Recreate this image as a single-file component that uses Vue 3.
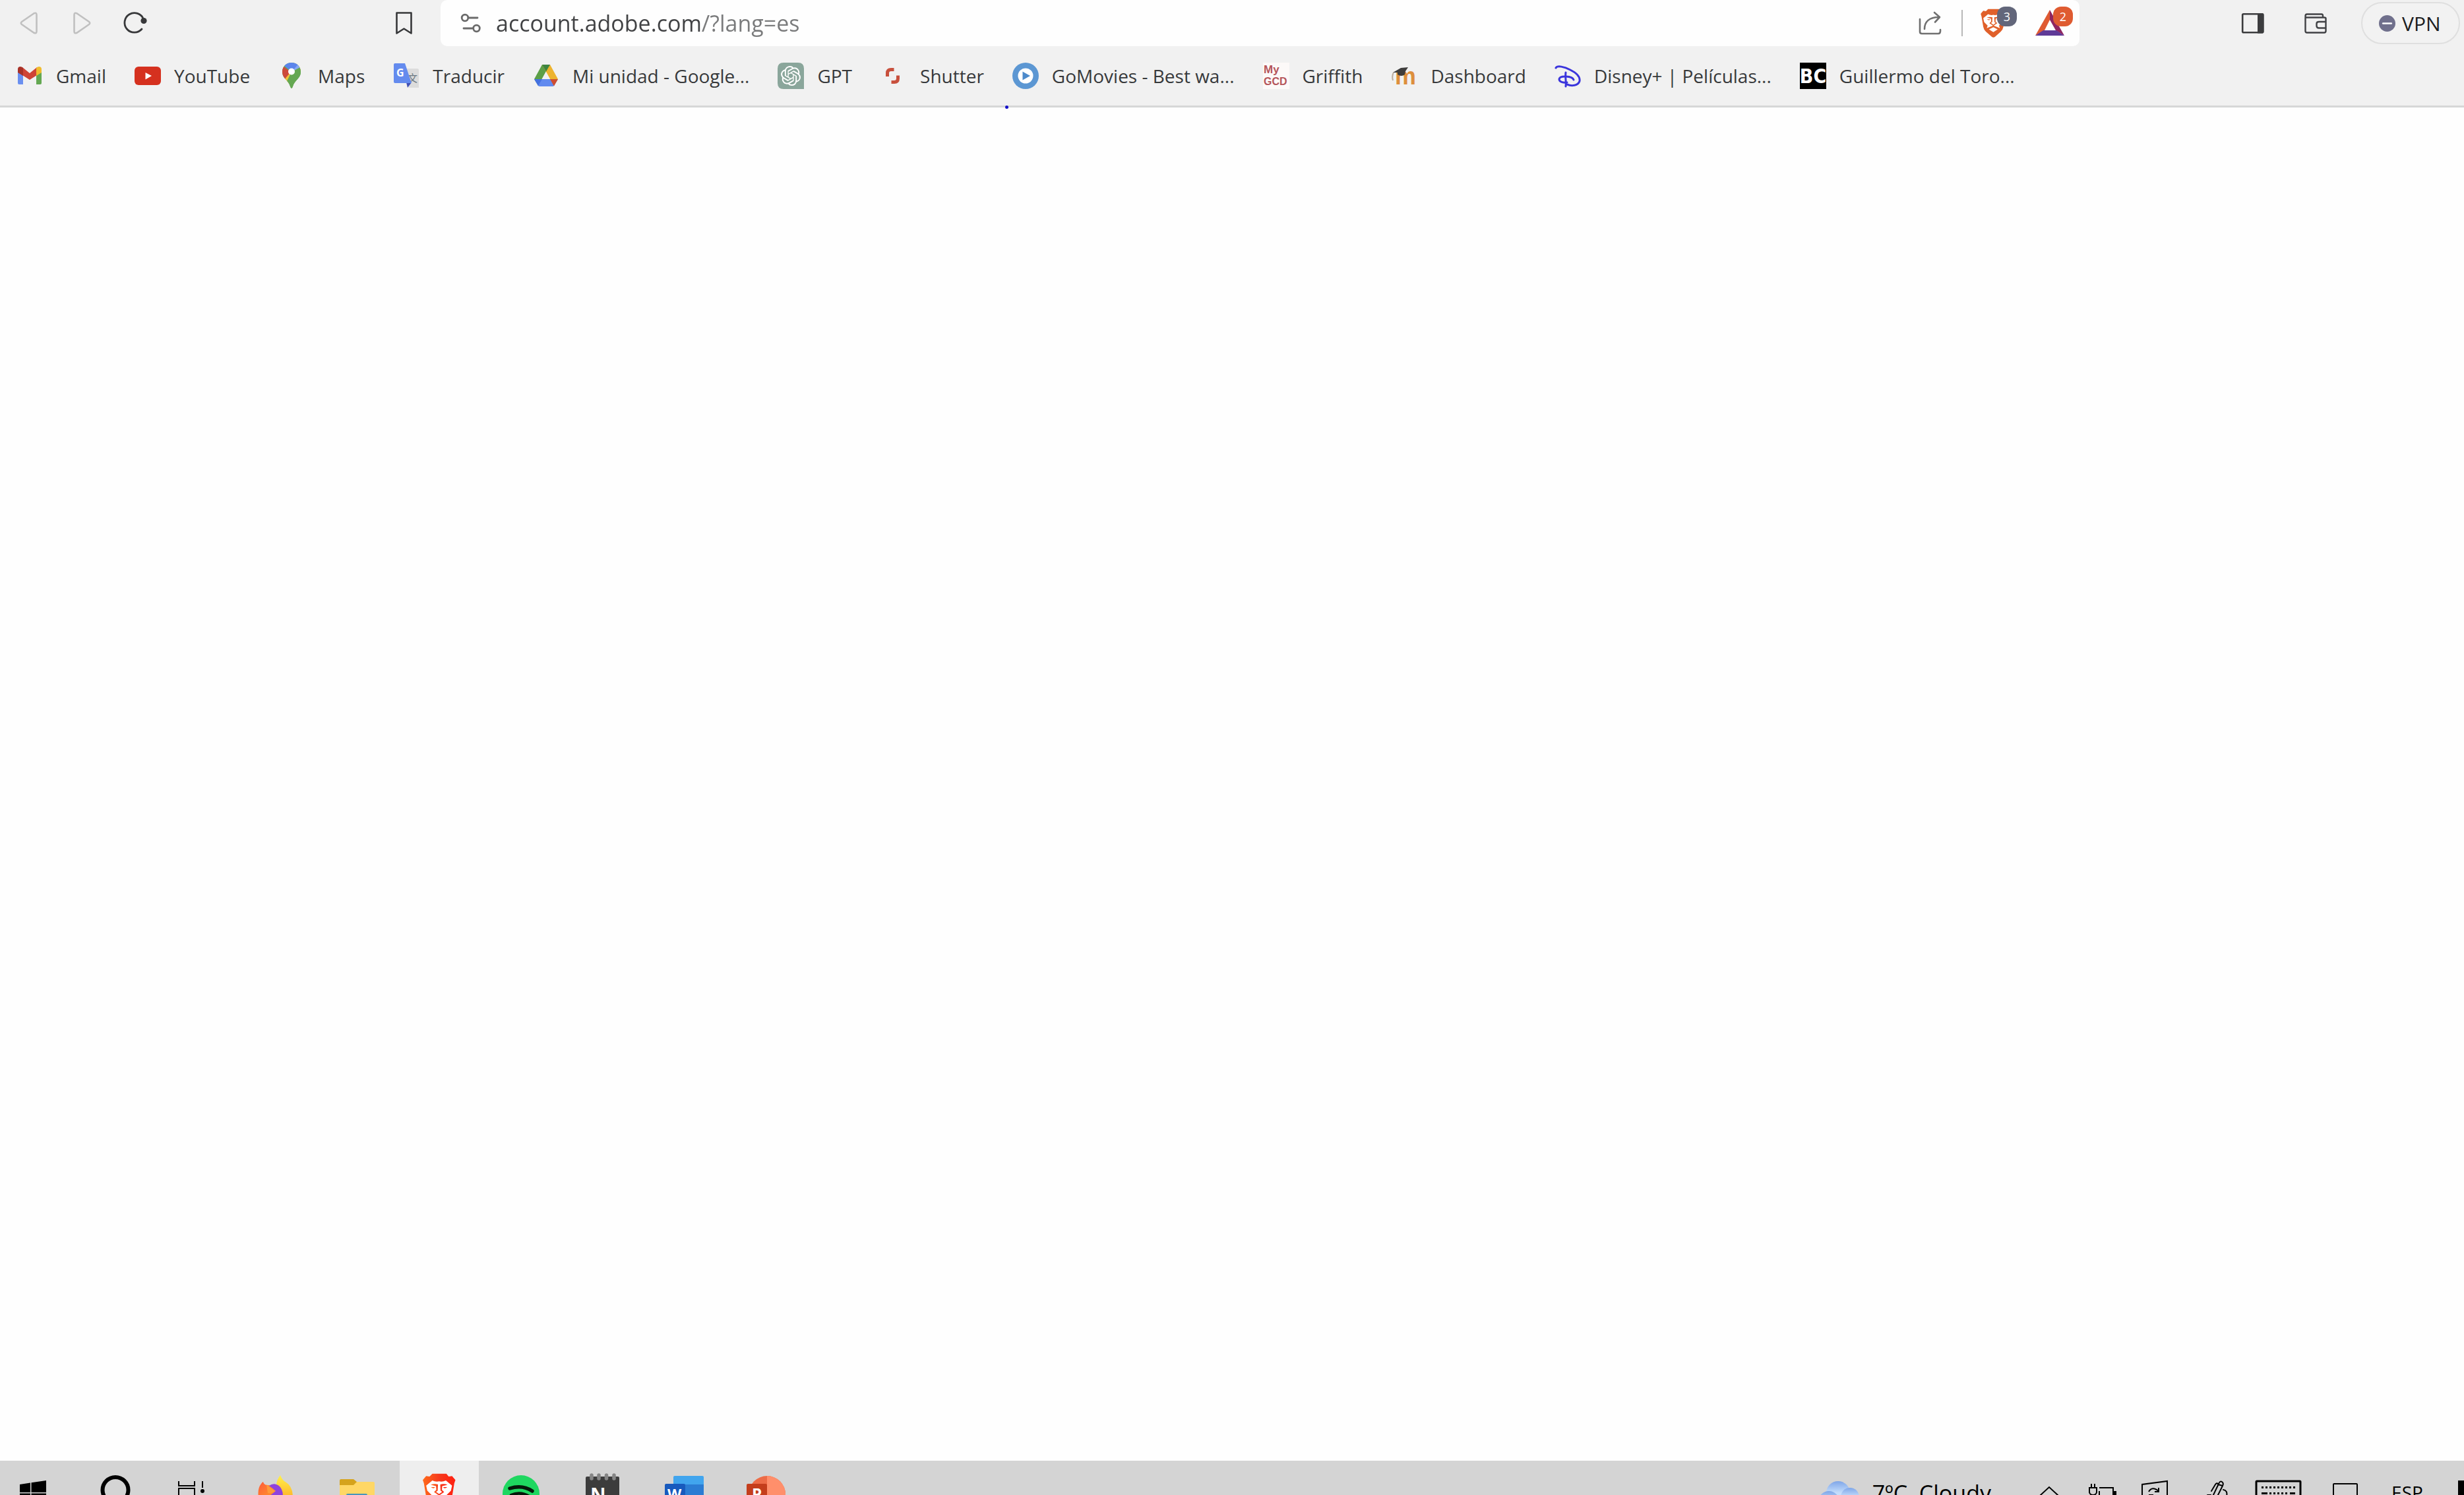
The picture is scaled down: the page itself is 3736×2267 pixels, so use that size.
<script setup>
import { ref } from 'vue'

const address = ref('account.adobe.com/?lang=es')

// Bookmarks bar, in display order
const bookmarks = [
  { icon: 'gmail', label: 'Gmail' },
  { icon: 'youtube', label: 'YouTube' },
  { icon: 'maps', label: 'Maps' },
  { icon: 'translate', label: 'Traducir' },
  { icon: 'drive', label: 'Mi unidad - Google...' },
  { icon: 'gpt', label: 'GPT' },
  { icon: 'shutter', label: 'Shutter' },
  { icon: 'gomovies', label: 'GoMovies - Best wa...' },
  { icon: 'griffith', label: 'Griffith' },
  { icon: 'moodle', label: 'Dashboard' },
  { icon: 'disney', label: 'Disney+ | Películas...' },
  { icon: 'bc', label: 'Guillermo del Toro...' }
]
</script>

<template>
  <div class="screen">
    <!-- Shared shapes -->
    <svg class="defs" aria-hidden="true">
      <symbol id="lion" viewBox="0 0 117 136">
        <path d="M34 2H84L92 12L104 10L116 24L112 36L104 84Q102 96 92 106L66 129Q58 136 51 129L24 106Q14 96 12 84L4 36L0 24L12 10L24 12Z" />
        <path fill="#fff" d="M34 26Q46 32 58 29Q70 32 82 26L104 44L100 62L84 78L88 90L74 84L58 78L42 84L28 90L32 78L16 62L12 44Z" />
        <path fill="#fff" d="M58 85L78 95L58 108L38 95Z" />
        <path d="M28 41Q42 36 54 40L53 62L47 66L58 74L69 66L63 62L62 40Q74 36 88 41L69 46L68 59L76 67L60 78V84H56V78L40 67L48 59L47 46Z" />
        <path d="M29 49H44L40 53Q34 54 29 49ZM87 49H72L76 53Q82 54 87 49Z" />
      </symbol>
      <linearGradient id="flame" x1="0" y1="0" x2="1" y2="0">
        <stop offset="0" stop-color="#ff6a1a" />
        <stop offset="0.5" stop-color="#f63a1c" />
        <stop offset="1" stop-color="#ff2010" />
      </linearGradient>
      <linearGradient id="fox" x1="0" y1="0" x2="1" y2="1">
        <stop offset="0" stop-color="#ff5a3a" />
        <stop offset="1" stop-color="#ff9a28" />
      </linearGradient>
      <linearGradient id="foxTail" x1="0" y1="0" x2="0" y2="1">
        <stop offset="0" stop-color="#fff04a" />
        <stop offset="1" stop-color="#ffb52a" />
      </linearGradient>
      <linearGradient id="cloud" x1="0" y1="0" x2="0" y2="1">
        <stop offset="0" stop-color="#7fa6e8" />
        <stop offset="0.5" stop-color="#c5defc" />
      </linearGradient>
    </svg>

    <header class="browser">
      <div class="nav-row">
        <div class="nav-left">
          <button class="nav-btn" aria-label="Back">
            <svg viewBox="0 0 40 40" fill="none" stroke="#c0c0c0" stroke-width="2.6">
              <path d="M27.5 5.2L9 18Q6.600 20 9 22L27.500 34.800Q31.500 36.500 31.500 32.500V7.500Q31.500 3.500 27.500 5.200Z" />
            </svg>
          </button>
          <button class="nav-btn" aria-label="Forward">
            <svg viewBox="0 0 40 40" fill="none" stroke="#c0c0c0" stroke-width="2.6">
              <path d="M12.500 5.200L31 18Q33.400 20 31 22L12.500 34.800Q8.500 36.500 8.500 32.500V7.500Q8.500 3.500 12.500 5.200Z" />
            </svg>
          </button>
          <button class="nav-btn" aria-label="Reload">
            <svg viewBox="0 0 40 40" fill="none" stroke="#37383a" stroke-width="2.8" stroke-linecap="round">
              <path d="M33.500 14A14.800 14.800 0 1 0 31 29" />
              <circle cx="34" cy="16.500" r="4.600" fill="#37383a" stroke="none" />
            </svg>
          </button>
          <button class="nav-btn save-btn" aria-label="Bookmark this page">
            <svg viewBox="0 0 40 40" fill="none" stroke="#37383a" stroke-width="2.600" stroke-linejoin="round">
              <path d="M9.500 4.500H31.500V35.500L20.500 28.500L9.500 35.500Z" />
            </svg>
          </button>
        </div>

        <div class="address-bar">
          <svg class="site-icon" viewBox="0 0 32 32" fill="none" stroke="#6a6a6a" stroke-width="2.800" stroke-linecap="round">
            <circle cx="7" cy="8" r="4.800" />
            <path d="M13 8H26M5 24H18" />
            <circle cx="24.500" cy="24" r="4.800" />
          </svg>
          <input v-model="address" class="address" type="text" aria-label="Address" spellcheck="false" />
          <button class="bar-btn" aria-label="Share">
            <svg viewBox="0 0 40 40" fill="none" stroke="#707070" stroke-width="2.600" stroke-linecap="round" stroke-linejoin="round">
              <path d="M4 14V33Q4 36 7 36H32Q35 36 35 32V30" />
              <path d="M11 29C11 18 18 11 33 11M26 4L34 11L27 18.500" />
            </svg>
          </button>
          <span class="bar-divider"></span>
          <button class="bar-btn" aria-label="Brave Shields">
            <svg class="lion" viewBox="0 0 117 136"><use href="#lion" fill="#e0602a" /></svg>
            <span class="badge shield-badge">3</span>
          </button>
          <button class="bar-btn" aria-label="Brave Rewards">
            <svg class="bat" viewBox="0 0 46 40">
              <path d="M23 0L1 39L15 31L23 15Z" fill="#df5a32" />
              <path d="M23 0L45 39L32 31L23 15Z" fill="#8f2560" />
              <path d="M1 39L13 31H33L45 39Z" fill="#5f3a97" />
            </svg>
            <span class="badge reward-badge">2</span>
          </button>
        </div>

        <div class="nav-right">
          <button class="tool-btn" aria-label="Sidebar">
            <svg viewBox="0 0 40 40">
              <rect x="4.200" y="6.200" width="31" height="28" rx="1.500" fill="none" stroke="#3b3c3e" stroke-width="2.600" />
              <path d="M27 5H34Q36.500 5 36.500 7V33Q36.500 35.500 34 35.500H27Z" fill="#3b3c3e" />
            </svg>
          </button>
          <button class="tool-btn" aria-label="Wallet">
            <svg viewBox="0 0 40 40" fill="none" stroke="#414245" stroke-width="2.400" stroke-linejoin="round">
              <path d="M4.500 11V32Q4.500 34.500 7 34.500H33Q35.500 34.500 35.500 32V13Q35.500 11.500 33 11.500H6Q4.500 11.500 4.500 9.500Q4.500 6.500 7 6.500H29Q31 6.500 31 9V11" />
              <path d="M35 18H25Q21.500 18 21.500 21V24Q21.500 27.500 25 27.500H35" />
            </svg>
          </button>
          <button class="vpn">
            <svg viewBox="0 0 24 24">
              <circle cx="12" cy="12" r="12" fill="#70708c" />
              <path d="M6 12H18" stroke="#fff" stroke-width="2.600" stroke-linecap="round" />
            </svg>
            VPN
          </button>
        </div>
      </div>

      <nav class="bookmarks" aria-label="Bookmarks">
        <a v-for="item in bookmarks" :key="item.icon" href="#" class="bookmark">
          <svg v-if="item.icon === 'gmail'" viewBox="0 0 40 40">
            <path d="M2 13L10 18V33H4Q2 33 2 31Z" fill="#6b90f0" />
            <path d="M38 13L30 18V33H36Q38 33 38 31Z" fill="#64a852" />
            <path d="M9 7L20 16L31 7V19L20 26L9 19Z" fill="#cf4435" />
            <path d="M2 15V10Q2 6 6 6Q8 6 10 8V20Z" fill="#a83228" />
            <path d="M38 15V10Q38 6 34 6Q32 6 30 8V20Z" fill="#f0bc2e" />
          </svg>
          <svg v-else-if="item.icon === 'youtube'" viewBox="0 0 40 40">
            <rect y="6" width="40" height="28" rx="6" fill="#d5311f" />
            <path d="M16.500 15L26 20L16.500 25.500Z" fill="#fff" />
          </svg>
          <svg v-else-if="item.icon === 'maps'" viewBox="0 0 40 40">
            <clipPath id="pin">
              <path d="M20 0C12 0 6 6 6 14C6 24 15 26 18 36Q20 42 22 36C25 26 34 24 34 14C34 6 28 0 20 0Z" />
            </clipPath>
            <g clip-path="url(#pin)">
              <path d="M0 0H40V40H0Z" fill="#65a852" />
              <path d="M6 26L28 -2L42 3L12 36Z" fill="#f0c13a" />
              <path d="M36 5L20 14L26 0Z" fill="#85a8f2" />
              <path d="M8 4L20 14L30 3L24 -2H8Z" fill="#5c85ec" />
              <path d="M4 3L19 14L8 27L0 20Z" fill="#cd4a3b" />
              <path d="M20 14L35 5L40 24L20 44L12 30Z" fill="#65a852" />
              <path d="M20 14L30 3L35 6Z" fill="#85a8f2" />
            </g>
            <circle cx="20" cy="13.500" r="5" fill="#fff" />
          </svg>
          <svg v-else-if="item.icon === 'translate'" viewBox="0 0 40 40">
            <path d="M20 9H37Q39 9 39 11V38H24Z" fill="#dcdcdc" />
            <text x="22" y="29" font-size="15" fill="#697780" font-family="Noto Sans CJK SC, sans-serif">文</text>
            <path d="M20 30H28L22 38Z" fill="#4150b4" />
            <path d="M3 1H18L28 31H3Q1 31 1 29V3Q1 1 3 1Z" fill="#648bee" />
            <text x="5" y="21" font-size="16" font-weight="700" fill="#fff" font-family="Open Sans, sans-serif">G</text>
          </svg>
          <svg v-else-if="item.icon === 'drive'" viewBox="0 0 40 40">
            <path d="M14 3H26L20 13L8 35L2 25Z" fill="#5c9f47" />
            <path d="M14 3H26L38 25H26Z" fill="#edb32e" />
            <path d="M14 3H26L20 13.500Z" fill="#3d8440" />
            <path d="M2 25H38L32 35Q31 36 30 36H10Q9 36 8 35Z" fill="#618aef" />
            <path d="M26 25H38L32 35.500Z" fill="#cf4e30" />
            <path d="M2 25H14L8 35Z" fill="#4471df" />
            <path d="M20 14L26 25H14Z" fill="#f1f1f1" />
          </svg>
          <svg v-else-if="item.icon === 'gpt'" viewBox="0 0 40 40">
            <path d="M9 0H31Q40 0 40 9V40H9Q0 40 0 31V9Q0 0 9 0Z" fill="#8aa69b" />
            <g transform="translate(5 5) scale(1.250)" fill="#fff">
              <path d="M22.2819 9.8211a5.9847 5.9847 0 0 0-.5157-4.9108 6.0462 6.0462 0 0 0-6.5098-2.9A6.0651 6.0651 0 0 0 4.9807 4.1818a5.9847 5.9847 0 0 0-3.9977 2.9 6.0462 6.0462 0 0 0 .7427 7.0966 5.98 5.98 0 0 0 .511 4.9107 6.051 6.051 0 0 0 6.5146 2.9001A5.9847 5.9847 0 0 0 13.2599 24a6.0557 6.0557 0 0 0 5.7718-4.2058 5.9894 5.9894 0 0 0 3.9977-2.9001 6.0557 6.0557 0 0 0-.7475-7.0729zm-9.022 12.6081a4.4755 4.4755 0 0 1-2.8764-1.0408l.1419-.0804 4.7783-2.7582a.7948.7948 0 0 0 .3927-.6813v-6.7369l2.02 1.1686a.071.071 0 0 1 .038.052v5.5826a4.504 4.504 0 0 1-4.4945 4.4944zm-9.6607-4.1254a4.4708 4.4708 0 0 1-.5346-3.0137l.142.0852 4.783 2.7582a.7712.7712 0 0 0 .7806 0l5.8428-3.3685v2.3324a.0804.0804 0 0 1-.0332.0615L9.74 19.9502a4.4992 4.4992 0 0 1-6.1408-1.6464zM2.3408 7.8956a4.485 4.485 0 0 1 2.3655-1.9728V11.6a.7664.7664 0 0 0 .3879.6765l5.8144 3.3543-2.0201 1.1685a.0757.0757 0 0 1-.071 0l-4.8303-2.7865A4.504 4.504 0 0 1 2.3408 7.872zm16.5963 3.8558L13.1038 8.364 15.1192 7.2a.0757.0757 0 0 1 .071 0l4.8303 2.7913a4.4944 4.4944 0 0 1-.6765 8.1042v-5.6772a.79.79 0 0 0-.407-.667zm2.0107-3.0231l-.142-.0852-4.7735-2.7818a.7759.7759 0 0 0-.7854 0L9.409 9.2297V6.8974a.0662.0662 0 0 1 .0284-.0615l4.8303-2.7866a4.4992 4.4992 0 0 1 6.6802 4.66zM8.3065 12.863l-2.02-1.1638a.0804.0804 0 0 1-.038-.0567V6.0742a4.4992 4.4992 0 0 1 7.3757-3.4537l-.142.0805L8.704 5.459a.7948.7948 0 0 0-.3927.6813zm1.0976-2.3654l2.602-1.4998 2.6069 1.4998v2.9994l-2.5974 1.4997-2.6067-1.4997Z" />
            </g>
          </svg>
          <svg v-else-if="item.icon === 'shutter'" viewBox="0 0 40 40" fill="none" stroke="#c8503d" stroke-width="5">
            <path d="M10.500 21V16Q10.500 10.500 16 10.500H20.500" />
            <path d="M26.500 19.500V24Q26.500 29.500 21 29.500H16.500" />
          </svg>
          <svg v-else-if="item.icon === 'gomovies'" viewBox="0 0 40 40">
            <circle cx="20" cy="20" r="20" fill="#5c97d3" />
            <circle cx="20" cy="20" r="11.500" fill="#fff" />
            <path d="M15.500 13.500L27 20L15.500 26.500Z" fill="#4c8acb" />
          </svg>
          <svg v-else-if="item.icon === 'griffith'" viewBox="0 0 40 40">
            <path d="M0 0H40V40H0Z" fill="#fcf9f8" />
            <g font-family="Liberation Sans, sans-serif" font-weight="700" fill="#b5555a">
              <text x="1" y="16" font-size="17">My</text>
              <text x="1" y="34" font-size="16">GCD</text>
            </g>
          </svg>
          <svg v-else-if="item.icon === 'moodle'" viewBox="0 0 40 40">
            <text x="6" y="33" font-size="36" font-weight="700" fill="#dd8f3c" font-family="Liberation Sans, sans-serif">m</text>
            <path d="M3 15L15 8L26 7L22 13L21 18Q16 22 10 18V15Z" fill="#3e3d3c" />
            <path d="M4 15Q1 20 3 27" fill="none" stroke="#b9ab9c" stroke-width="2" />
          </svg>
          <svg v-else-if="item.icon === 'disney'" viewBox="0 0 40 40" fill="none" stroke="#3b35dc" stroke-width="3" stroke-linecap="round">
            <path d="M2 8C4 4 15 6 24 11C34 16 39 22 38 28C36 35 26 36 19 33" />
            <path d="M17 15C16 22 18 30 17 36" />
            <path d="M29 26C27 20 8 19 7 25C7 29 13 31 19 30" />
          </svg>
          <svg v-else viewBox="0 0 40 40">
            <path d="M0 0H40V40H0Z" fill="#000" />
            <text x="20" y="31" font-size="30" font-weight="700" fill="#fff" text-anchor="middle" font-family="Liberation Sans Narrow, Arial Narrow, DejaVu Sans Condensed, sans-serif">BC</text>
          </svg>
          <span>{{ item.label }}</span>
        </a>
      </nav>
    </header>

    <main class="page">
      <span class="load-dot"></span>
    </main>

    <footer class="taskbar">
      <div class="apps">
        <button class="app start" aria-label="Start">
          <svg viewBox="0 0 106 52">
            <path d="M30 36L46 33.500V48H30ZM47.500 33.200L70 30V48H47.500ZM30 49.500H46V52H30ZM47.500 49.500H70V52H47.500Z" />
          </svg>
        </button>
        <button class="app" aria-label="Search">
          <svg viewBox="0 0 120 52"><circle cx="65" cy="44.500" r="19.500" fill="none" stroke="#000" stroke-width="6" /></svg>
        </button>
        <button class="app" aria-label="Task View">
          <svg viewBox="0 0 120 52" fill="none" stroke="#000" stroke-width="2">
            <path d="M37 31V38H61V31M37 52V42H61V52M73 31V41" />
            <circle cx="73" cy="46" r="3" fill="#000" stroke="none" />
          </svg>
        </button>
        <button class="app" aria-label="Firefox">
          <svg viewBox="0 0 120 52">
            <path d="M61 36Q62 28 67 22Q70 30 76 33Q86 39 86 56H60Z" fill="url(#foxTail)" />
            <path d="M34 56Q32 42 38 35Q40 32 41 32Q42 36 46 37Q55 36 60 46L56 56Z" fill="url(#fox)" />
            <path d="M50 38Q58 32 66 39Q71 44 71 54H50L60 46Q56 42 50 38Z" fill="#8f42dd" />
            <path d="M46 36L59 46Q55 50 48 49Z" fill="#ff9a38" />
          </svg>
        </button>
        <button class="app" aria-label="File Explorer">
          <svg viewBox="0 0 120 52">
            <path d="M33 32H84Q86 32 86 34V60H33Z" fill="#ffd765" />
            <path d="M33 30Q33 28 35 28H54L59 32L54 37H33Z" fill="#d5a31c" />
            <path d="M43 52Q43 50 45 50H73Q75 50 75 52Z" fill="#4896ba" />
          </svg>
        </button>
        <button class="app active" aria-label="Brave">
          <svg viewBox="0 0 120 52"><use href="#lion" x="35" y="19" width="50" height="58" fill="url(#flame)" /></svg>
        </button>
        <button class="app" aria-label="Spotify">
          <svg viewBox="0 0 120 52">
            <circle cx="60" cy="50" r="28" fill="#1fd760" />
            <g fill="none" stroke="#06180a" stroke-linecap="round">
              <path d="M43 42Q62 36 77 46" stroke-width="5.500" />
              <path d="M45 52Q60 46 74 55" stroke-width="4.500" />
            </g>
          </svg>
        </button>
        <button class="app" aria-label="Notepads">
          <svg viewBox="0 0 120 52">
            <rect x="34" y="24" width="51" height="50" rx="2" fill="#3c3c3c" />
            <path d="M43 22V27M54 22V27M65.500 22V27M77 22V27" stroke="#858585" stroke-width="5.500" stroke-linecap="round" />
            <text x="41" y="62" font-size="29" font-weight="700" fill="#fff" font-family="Open Sans, sans-serif">N</text>
          </svg>
        </button>
        <button class="app" aria-label="Word">
          <svg viewBox="0 0 120 52">
            <path d="M43 36V25Q43 23 45 23H87Q89 23 89 25V36Z" fill="#41a5ee" />
            <path d="M43 36H89V52H43Z" fill="#2b7cd3" />
            <rect x="30" y="35" width="31" height="31" rx="2" fill="#185abd" />
            <text x="34" y="58" font-size="22" font-weight="700" fill="#fff" font-family="Open Sans, sans-serif">W</text>
          </svg>
        </button>
        <button class="app" aria-label="PowerPoint">
          <svg viewBox="0 0 120 52">
            <circle cx="61" cy="51" r="28" fill="#ed6c47" />
            <path d="M61 23A28 28 0 0 1 89 51V52H61Z" fill="#ff8f6b" />
            <rect x="30" y="35" width="31" height="31" rx="2" fill="#c43e1c" />
            <text x="38" y="59" font-size="24" font-weight="700" fill="#fff" font-family="Open Sans, sans-serif">P</text>
          </svg>
        </button>
      </div>

      <div class="tray">
        <button class="weather">
          <svg viewBox="0 0 60 52">
            <circle cx="28" cy="49" r="18" fill="url(#cloud)" />
            <circle cx="14" cy="62" r="16" fill="url(#cloud)" />
            <circle cx="46" cy="55" r="14" fill="url(#cloud)" />
          </svg>
          <span>7ºC&nbsp; Cloudy</span>
        </button>
        <button class="tray-btn" aria-label="Show hidden icons">
          <svg viewBox="0 0 80 52" fill="none" stroke="#000" stroke-width="2"><path d="M26 53L40 40L54 53" /></svg>
        </button>
        <button class="tray-btn" aria-label="Battery">
          <svg viewBox="0 0 80 52" fill="none" stroke="#000" stroke-width="2">
            <path d="M36 41H57V52M36 52V46" />
            <path d="M59 47H61V52H59Z" fill="#000" />
            <path d="M21 41H32V48Q31 52 26.500 52Q22 52 21 48ZM24 41V35M29 41V35" />
          </svg>
        </button>
        <button class="tray-btn" aria-label="Display">
          <svg viewBox="0 0 80 52" fill="none" stroke="#000" stroke-width="2">
            <path d="M21 54V36L59 31V54M31 47Q36 38 46 46M46 41V47H40M31 52H38" />
          </svg>
        </button>
        <button class="tray-btn wide" aria-label="Pen">
          <svg viewBox="0 0 98 52" fill="none" stroke="#000" stroke-width="2" stroke-linecap="round">
            <path d="M48 54L57 35Q59 30 62 32Q65 34 63 38L55 54M56 36L63 38" />
            <path d="M46 46L52 36Q54 33 56 35M64 44Q71 45 69 54M40 52H45" />
          </svg>
        </button>
        <button class="tray-btn wide" aria-label="Touch keyboard">
          <svg viewBox="0 0 98 52" fill="none" stroke="#000">
            <rect x="16" y="31" width="67" height="40" rx="1" stroke-width="3" />
            <path d="M24 40.500H76" stroke-width="3" stroke-dasharray="3 3" />
            <path d="M24 49.500H33M36 49.500H66" stroke-width="3" stroke-dasharray="3 3" />
            <path d="M24 49.500H32M67 49.500H75" stroke-width="3" />
          </svg>
        </button>
        <button class="tray-btn wide" aria-label="Notifications">
          <svg viewBox="0 0 98 52"><rect x="35" y="35" width="36" height="34" rx="1" fill="none" stroke="#000" stroke-width="2" /></svg>
        </button>
        <button class="tray-btn wide lang">ESP</button>
        <span class="tray-edge"></span>
      </div>
    </footer>
  </div>
</template>

<style>
body {
  margin: 0;
}
</style>

<style scoped>
.screen {
  display: flex;
  flex-direction: column;
  height: 100vh;
  overflow: hidden;
  background: #fefefe;
  font-family: "Segoe UI", "Open Sans", sans-serif;
  color: #37393b;
}

.defs {
  position: absolute;
  width: 0;
  height: 0;
}

button {
  padding: 0;
  border: none;
  background: none;
  font-family: inherit;
  color: inherit;
  cursor: pointer;
}

svg {
  display: block;
  flex: none;
}

/* browser chrome */
.browser {
  background: #f1f1f1;
  border-bottom: 3px solid #d6d7d7;
}

.nav-row {
  display: flex;
  height: 70px;
}

.nav-left {
  display: flex;
  flex: none;
  box-sizing: border-box;
  width: 668px;
  padding: 0 16px 0 4px;
}

.nav-btn {
  display: flex;
  align-items: center;
  justify-content: center;
  width: 80px;
}

.nav-btn svg,
.tool-btn svg {
  width: 40px;
  height: 40px;
}

.save-btn {
  margin-left: auto;
}

/* address bar */
.address-bar {
  display: flex;
  flex: 1;
  align-items: center;
  min-width: 0;
  box-sizing: border-box;
  padding: 0 22px 0 30px;
  border-radius: 10px;
  background: #fefefe;
}

.site-icon {
  width: 32px;
  height: 32px;
}

/* host in dark grey, path and query in light grey */
.address {
  flex: 1;
  min-width: 0;
  height: 60px;
  margin-left: 22px;
  padding: 0;
  border: none;
  outline: none;
  font-family: inherit;
  font-size: 34px;
  color: transparent;
  background: linear-gradient(to right, #414244 312px, #7a7b7c 312px);
  background-clip: text;
  -webkit-background-clip: text;
}

.bar-btn {
  position: relative;
  display: flex;
  align-items: center;
  height: 60px;
}

.bar-btn svg {
  width: 40px;
  height: 40px;
}

.bar-btn .lion {
  width: 39px;
  height: 45px;
}

.bar-btn .bat {
  width: 46px;
  height: 40px;
  margin-left: 43px;
}

.bar-divider {
  width: 2px;
  height: 40px;
  margin: 0 27px;
  background: #b8b8b8;
}

.badge {
  position: absolute;
  top: 5px;
  width: 30px;
  height: 30px;
  border-radius: 12px;
  font-size: 18px;
  line-height: 31px;
  text-align: center;
  color: #fff;
}

.shield-badge {
  left: 25px;
  background: #62667a;
}

.reward-badge {
  right: -12px;
  background: #df5b31;
}

.nav-right {
  display: flex;
  flex: none;
  align-items: center;
  justify-content: flex-end;
  box-sizing: border-box;
  width: 583px;
  padding-right: 6px;
}

.tool-btn {
  display: flex;
  align-items: center;
  justify-content: center;
  width: 95px;
  height: 60px;
}

.vpn {
  display: flex;
  align-items: center;
  gap: 10px;
  box-sizing: border-box;
  width: 150px;
  height: 64px;
  margin-left: 22px;
  padding-left: 25px;
  border: 2px solid #dfdfdf;
  border-radius: 32px;
  background: #f2f2f2;
  font-size: 30px;
  color: #1c1d1f;
}

.vpn svg {
  width: 25px;
  height: 25px;
}

/* bookmarks */
.bookmarks {
  display: flex;
  gap: 43px;
  height: 90px;
  padding-left: 25px;
}

.bookmark {
  display: flex;
  align-items: center;
  gap: 20px;
  font-size: 28px;
  color: #37393b;
  text-decoration: none;
  white-space: nowrap;
}

.bookmark svg {
  width: 40px;
  height: 40px;
}

.page {
  position: relative;
  flex: 1;
  background: #fefefe;
}

/* page loading spinner, barely started */
.load-dot {
  position: absolute;
  top: -3px;
  left: 1524px;
  width: 5px;
  height: 5px;
  border-radius: 50%;
  background: #1410c8;
}

/* taskbar */
.taskbar {
  display: flex;
  flex: none;
  justify-content: space-between;
  height: 52px;
  overflow: hidden;
  background: #d4d4d4;
  color: #000;
}

.apps {
  display: flex;
  gap: 4px;
}

.app {
  width: 120px;
}

.start {
  width: 106px;
}

.app.active {
  background: #eeeeee;
}

.app svg,
.tray-btn svg {
  width: 100%;
  height: 52px;
}

.tray {
  display: flex;
  align-items: flex-start;
}

.weather {
  display: flex;
  align-items: flex-start;
  gap: 20px;
  margin-right: 48px;
  font-size: 34px;
  line-height: 48px;
}

.weather svg {
  width: 60px;
  height: 52px;
}

.weather span {
  padding-top: 25px;
}

.tray-btn {
  width: 80px;
}

.tray-btn.wide {
  width: 98px;
}

.lang {
  padding-top: 26px;
  font-size: 28px;
  line-height: 44px;
}

.tray-edge {
  width: 9px;
  height: 24px;
  margin: 30px 0 0 28px;
  background: #000;
}
</style>
